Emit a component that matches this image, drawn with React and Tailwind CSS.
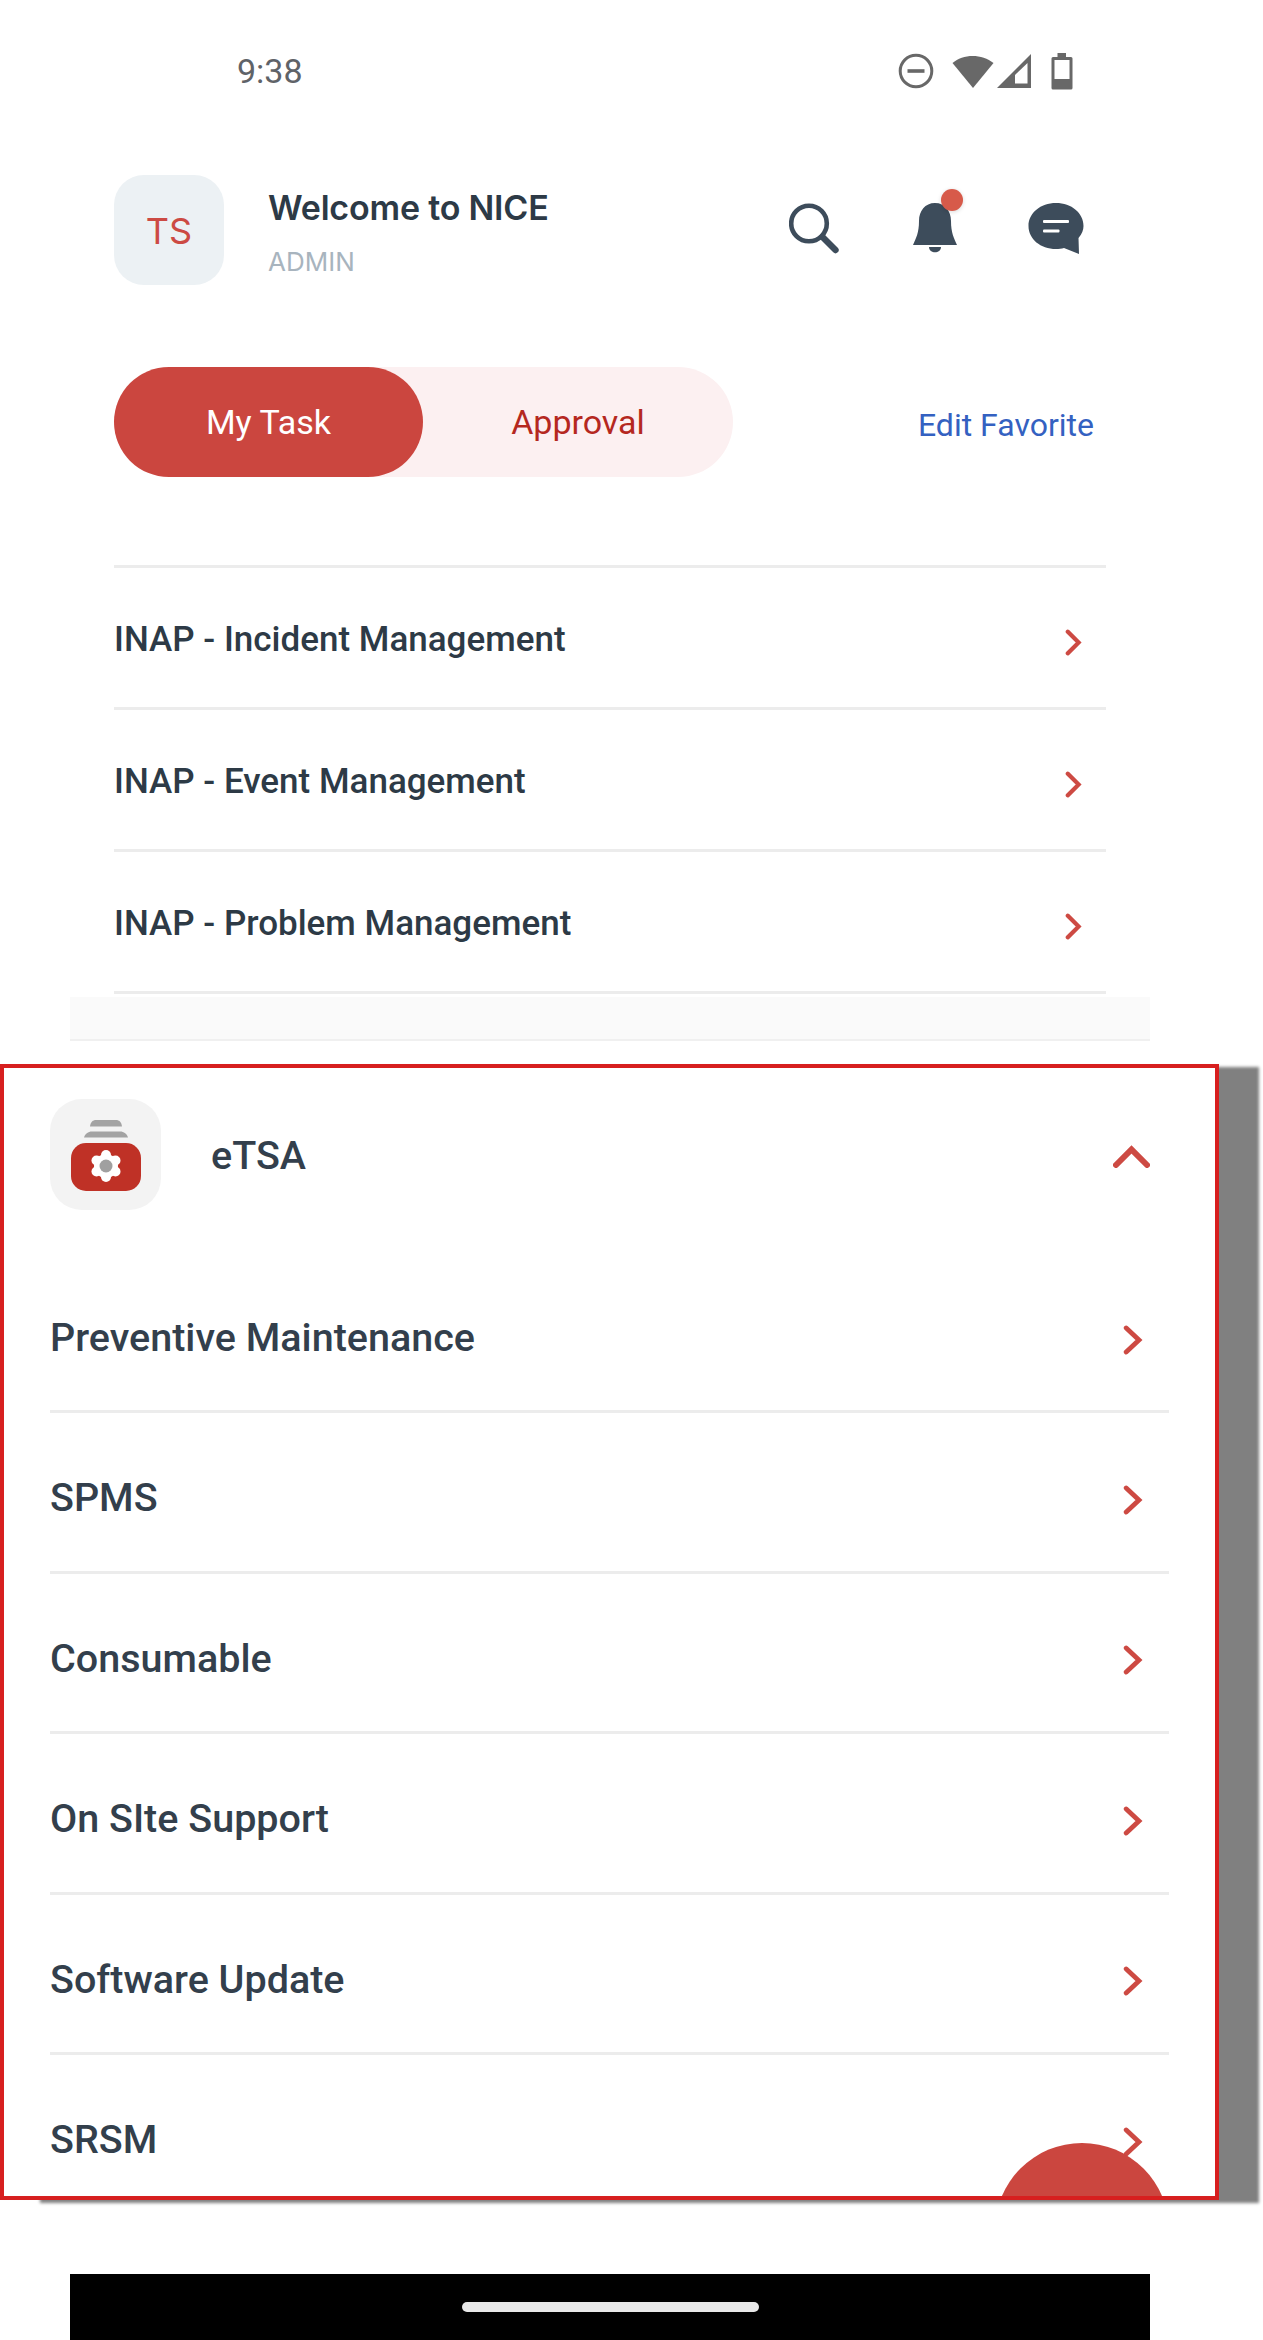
const topItems = ['INAP - Incident Management', 'INAP - Event Management', 'INAP - Problem Management']
const panelItems = ['Preventive Maintenance', 'SPMS', 'Consumable', 'On SIte Support', 'Software Update', 'SRSM']

const Chevron = ({ className }) => (
  <svg viewBox="0 0 20 30" className={className} preserveAspectRatio="none">
    <path d="M3.2 3 L16 15 L3.2 27" fill="none" stroke="#cd4a43" strokeWidth="4.8" strokeLinecap="round" strokeLinejoin="miter" />
  </svg>
)

const StatusIcons = () => (
  <div className="flex items-center">
    <svg width="38" height="38" viewBox="0 0 38 38" className="mr-[17px]">
      <circle cx="19" cy="19" r="15.8" fill="none" stroke="#686868" strokeWidth="3" />
      <rect x="10.5" y="17.2" width="17" height="3.6" fill="#686868" />
    </svg>
    <svg width="42" height="36" viewBox="0 0 42 36" className="mr-[2px]">
      <path d="M0.5 10 C 11 0.5 30 0.5 41.5 10 L 21 35 Z" fill="#686868" />
    </svg>
    <svg width="36" height="36" viewBox="0 0 36 36" className="mr-[19px]">
      <path d="M35 1 V35 H1 Z" fill="#686868" />
      <path d="M31.5 10 V30.5 H19 V22 Z" fill="#fff" />
    </svg>
    <svg width="22" height="37" viewBox="0 0 22 37">
      <path d="M6.5 0 H15 V4 H20 A1.5 1.5 0 0 1 21.5 5.5 V35 A1.5 1.5 0 0 1 20 36.5 H2 A1.5 1.5 0 0 1 0.5 35 V5.5 A1.5 1.5 0 0 1 2 4 H6.5 Z" fill="#686868" />
      <rect x="3.5" y="7" width="15" height="19" fill="#fff" />
    </svg>
  </div>
)

const HeaderIcons = () => (
  <div className="ml-auto flex items-start pt-[28px] pr-[179px]">
    <svg width="52" height="52" viewBox="0 0 52 52" className="mr-[72px]">
      <circle cx="20" cy="20.5" r="17.8" fill="none" stroke="#3d4c5b" strokeWidth="4.6" />
      <path d="M33.5 34 L46.5 47" fill="none" stroke="#3d4c5b" strokeWidth="6.4" strokeLinecap="round" />
    </svg>
    <div className="relative mr-[71px] h-[50px] w-[44px]">
      <svg width="44" height="50" viewBox="0 0 44 50">
        <path d="M22 0 C 32 0 38 8 38 18 C 38 30 41 35 44 42 H0 C 3 35 6 30 6 18 C 6 8 12 0 22 0 Z" fill="#3d4c5b" />
        <path d="M16 44 H28 C 28 51 16 51 16 44 Z" fill="#3d4c5b" />
      </svg>
      <div className="absolute -top-[14px] left-[28px] h-[22px] w-[22px] rounded-full bg-[#d75a4a] shadow-[0_1px_4px_rgba(0,0,0,0.15)]" />
    </div>
    <svg width="56" height="52" viewBox="0 0 56 52">
      <path d="M28 0 C 43.5 0 55.5 10 55.5 23 C 55.5 27 54 31 50.5 35 L 51 51 L 36 45 C 33.5 45.7 31 46 28 46 C 12.5 46 0.5 36 0.5 23 C 0.5 10 12.5 0 28 0 Z" fill="#3d4c5b" />
      <rect x="15" y="17" width="26" height="3" rx="1" fill="#fff" />
      <rect x="15" y="26.5" width="16.5" height="3" rx="1" fill="#fff" />
    </svg>
  </div>
)

const EtsaIcon = () => (
  <div className="flex h-[111px] w-[111px] shrink-0 items-center justify-center rounded-[32px] bg-[#f3f3f3]">
    <svg width="72" height="72" viewBox="0 0 72 72">
      <path d="M20 7.5 C 20.5 3 23 1 26 1 H46 C 49 1 51.5 3 52 7.5 Z" fill="#a3a3a3" />
      <path d="M14 18.5 C 15 15 18 12.5 22 12.5 H50 C 54 12.5 57 15 58 18.5 Z" fill="#a3a3a3" />
      <rect x="1" y="24" width="70" height="48" rx="15" fill="#bf3126" />
      <g fill="#fff">
        <circle cx="36" cy="47" r="12" />
        <circle cx="36" cy="36" r="5" />
        <circle cx="36" cy="58" r="5" />
        <circle cx="26.5" cy="41.5" r="5" />
        <circle cx="45.5" cy="41.5" r="5" />
        <circle cx="26.5" cy="52.5" r="5" />
        <circle cx="45.5" cy="52.5" r="5" />
      </g>
      <circle cx="36" cy="47" r="6.5" fill="#a0a0a0" />
    </svg>
  </div>
)

export default function App() {
  return (
    <div className="h-[2340px] w-[1263px] overflow-hidden bg-white font-['Inter',sans-serif]">
      {/* Status bar */}
      <div className="flex h-[175px] items-start justify-between pl-[237px] pr-[190px] pt-[52px]">
        <span className="font-['Roboto',sans-serif] text-[34px] leading-[38px] text-[#5f6368]">9:38</span>
        <StatusIcons />
      </div>

      {/* Header */}
      <div className="flex h-[110px] pl-[114px]">
        <div className="flex h-[110px] w-[110px] items-center justify-center rounded-[30px] bg-[#ecf1f4] pt-[2px] text-[36px] text-[#cc4a43]">TS</div>
        <div className="ml-[44px]">
          <div className="mt-[11px] text-[34px] font-semibold leading-[44px] tracking-[-0.2px] text-[#2d3a46]">Welcome to NICE</div>
          <div className="mt-[16px] text-[26px] leading-[32px] text-[#a8b4be]">ADMIN</div>
        </div>
        <HeaderIcons />
      </div>

      {/* Tabs */}
      <div className="mt-[82px] flex items-center pl-[114px] pr-[169px] font-['Roboto',sans-serif]">
        <div className="flex h-[110px] w-[619px] rounded-full bg-[#fcf0f1]">
          <div className="flex w-[309px] items-center justify-center rounded-full bg-[#cb463f] text-[34px] text-white">My Task</div>
          <div className="flex flex-1 items-center justify-center text-[34px] text-[#b5281f]">Approval</div>
        </div>
        <span className="ml-auto mt-[6px] text-[32px] text-[#3461c1]">Edit Favorite</span>
      </div>

      {/* Favorite list */}
      <div className="ml-[114px] mt-[88px] w-[992px] border-t-[3px] border-[#ececec] font-['Roboto',sans-serif]">
        {topItems.map((item) => (
          <div key={item} className="flex h-[142px] items-center justify-between border-b-[3px] border-[#ececec] pr-[24px] pt-[5px]">
            <span className="text-[35px] font-medium text-[#2d3a46]">{item}</span>
            <Chevron className="mt-[4px] h-[27px] w-[17px]" />
          </div>
        ))}
      </div>
      <div className="ml-[70px] mt-[3px] h-[44px] w-[1080px] border-b-2 border-[#f0f0f0] bg-[#fafafa]" />

      {/* eTSA panel */}
      <div className="relative mt-[23px] h-[1136px] w-[1219px] overflow-hidden border-4 border-[#d71f1f] bg-white px-[46px] pt-[31px] font-['Roboto',sans-serif] shadow-[40px_3px_3px_#808080]">
        <div className="flex items-center">
          <EtsaIcon />
          <span className="ml-[50px] mt-[3px] text-[39.5px] font-medium text-[#333f4c]">eTSA</span>
          <svg width="37" height="23" viewBox="0 0 37 23" className="ml-auto mr-[19px] mt-[4px]">
            <path d="M3 20 L18.5 4.5 L34 20" fill="none" stroke="#cd4a43" strokeWidth="6" strokeLinecap="round" strokeLinejoin="miter" />
          </svg>
        </div>
        <div className="mt-[43px]">
          {panelItems.map((item) => (
            <div key={item} className="flex h-[160.4px] items-center justify-between border-b-[3px] border-[#ececec] pr-[26px] pt-[12px]">
              <span className="text-[39.5px] font-medium text-[#333f4c]">{item}</span>
              <Chevron className="mt-[4px] h-[30px] w-[20px]" />
            </div>
          ))}
        </div>
        <div className="absolute left-[991px] top-[1075px] h-[174px] w-[174px] rounded-full bg-[#cb463f]" />
      </div>

      {/* Nav bar */}
      <div className="ml-[70px] mt-[74px] flex h-[66px] w-[1080px] justify-center bg-black pt-[28px]">
        <div className="h-[10px] w-[297px] rounded-full bg-[#e8e8e8]" />
      </div>
    </div>
  )
}
